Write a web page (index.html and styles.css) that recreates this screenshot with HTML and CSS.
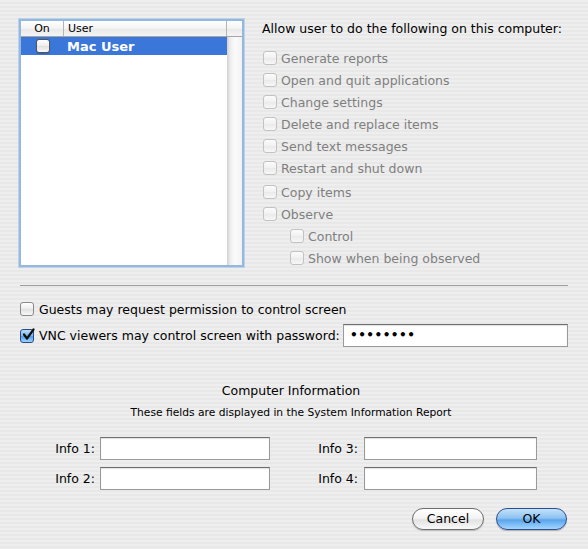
FILE: index.html
```html
<!DOCTYPE html>
<html>
<head>
<meta charset="utf-8">
<link rel="stylesheet" href="styles.css">
</head>
<body>
<div class="win">
  <div class="top">
    <div class="table-box">
      <div class="thead">
        <div class="th th-on">On</div>
        <div class="th th-user">User</div>
        <div class="th th-rest"></div>
      </div>
      <div class="tbody">
        <div class="rows">
          <div class="row sel">
            <div class="td-on"><span class="cb cb-table"></span></div>
            <div class="td-user">Mac User</div>
          </div>
        </div>
        <div class="scrollcol"></div>
      </div>
    </div>
    <div class="perms">
      <div class="perms-title">Allow user to do the following on this computer:</div>
      <div class="plist">
        <div class="prow"><span class="cb dis"></span><span class="lbl">Generate reports</span></div>
        <div class="prow"><span class="cb dis"></span><span class="lbl">Open and quit applications</span></div>
        <div class="prow"><span class="cb dis"></span><span class="lbl">Change settings</span></div>
        <div class="prow"><span class="cb dis"></span><span class="lbl">Delete and replace items</span></div>
        <div class="prow"><span class="cb dis"></span><span class="lbl">Send text messages</span></div>
        <div class="prow"><span class="cb dis"></span><span class="lbl">Restart and shut down</span></div>
        <div class="prow gap"><span class="cb dis"></span><span class="lbl">Copy items</span></div>
        <div class="prow"><span class="cb dis"></span><span class="lbl">Observe</span></div>
        <div class="prow sub"><span class="cb dis"></span><span class="lbl">Control</span></div>
        <div class="prow sub"><span class="cb dis"></span><span class="lbl">Show when being observed</span></div>
      </div>
    </div>
  </div>

  <div class="sep"></div>

  <div class="opt">
    <span class="cb"></span><span class="olbl">Guests may request permission to control screen</span>
  </div>
  <div class="opt opt-vnc">
    <span class="cb cb-checked">
      <svg width="14" height="14" viewBox="0 0 14 14"><path d="M3 6.5 L6 10.5 L12.5 1.5" fill="none" stroke="#111" stroke-width="2.2" stroke-linecap="round" stroke-linejoin="round"/></svg>
    </span>
    <span class="olbl">VNC viewers may control screen with password:</span>
    <div class="field pw">&#8226;&#8226;&#8226;&#8226;&#8226;&#8226;&#8226;&#8226;</div>
  </div>

  <div class="info-title">Computer Information</div>
  <div class="info-sub">These fields are displayed in the System Information Report</div>

  <div class="info-grid">
    <div class="ilbl">Info 1:</div><div class="field f1"></div>
    <div class="ilbl l2">Info 3:</div><div class="field f2"></div>
    <div class="ilbl">Info 2:</div><div class="field f1"></div>
    <div class="ilbl l2">Info 4:</div><div class="field f2"></div>
  </div>

  <div class="buttons">
    <div class="btn btn-cancel">Cancel</div>
    <div class="btn btn-ok">OK</div>
  </div>
</div>
</body>
</html>
```

FILE: styles.css
```css
* { box-sizing: border-box; }
html, body { margin: 0; padding: 0; }
body {
  font-family: "Lucida Grande", "DejaVu Sans", sans-serif;
  font-size: 12.5px;
  color: #000;
  background: repeating-linear-gradient(to bottom, #eeeeee 0, #eeeeee 2px, #e8e8e8 2px, #e8e8e8 4px);
}
.win {
  width: 588px;
  height: 549px;
  padding-top: 19px;
  overflow: hidden;
}
.top {
  display: flex;
  margin-left: 19px;
  height: 248px;
}
.table-box {
  width: 225px;
  height: 248px;
  border: 2px solid #94b8e0;
  box-shadow: 0 0 0 1px rgba(160,195,232,.6);
  background: #fff;
  display: flex;
  flex-direction: column;
}
.thead {
  display: flex;
  height: 16px;
  border-bottom: 1px solid #a5a5a5;
  background: linear-gradient(#ffffff, #f3f3f3 50%, #e8e8e8 51%, #f4f4f4);
  font-size: 11px;
  line-height: 15px;
}
.th { border-right: 1px solid #b4b4b4; }
.th-on { width: 43px; text-align: center; }
.th-user { width: 163px; padding-left: 4px; }
.th-rest { flex: 1; border-right: 0; }
.tbody { flex: 1; display: flex; }
.rows { width: 206px; }
.row { display: flex; height: 18px; align-items: center; }
.row.sel { background: #3a77d8; color: #fff; }
.td-on { width: 43px; display: flex; justify-content: center; }
.td-user { padding-left: 3px; font-weight: bold; font-size: 13px; }
.scrollcol {
  flex: 1;
  background: linear-gradient(to right, #cfcfcf, #ececec 3px, #fbfbfb 8px, #f2f2f2);
}
.cb {
  display: inline-block;
  width: 14px;
  height: 14px;
  border: 1px solid #8a8a8a;
  border-radius: 3px;
  background: linear-gradient(#ffffff, #ececec 50%, #e0e0e0 51%, #f8f8f8);
  flex: none;
}
.cb-table { border-color: #555; box-shadow: 0 1px 1px rgba(0,0,0,.2); }
.cb.dis { border-color: #c2c2c2; background: linear-gradient(#fbfbfb, #f1f1f1 50%, #eaeaea 51%, #f7f7f7); }
.cb-checked {
  border-color: #2a4b8a;
  background: linear-gradient(#b9dcfb, #7bb7ee 50%, #4e9ae8 51%, #9fd4ff);
  position: relative;
}
.cb-checked svg { position: absolute; left: 0; top: -2px; }
.perms { margin-left: 18px; padding-top: 2px; }
.perms-title { line-height: 16px; }
.plist { margin-top: 10px; color: #7f7f7f; }
.prow { height: 22px; display: flex; align-items: center; padding-left: 1px; }
.prow.gap { margin-top: 2px; }
.prow.sub { padding-left: 28px; }
.prow .lbl { margin-left: 4px; }
.sep {
  margin: 18px 20px 0 20px;
  height: 1px;
  background: #9d9d9d;
}
.opt {
  display: flex;
  align-items: center;
  height: 22px;
  margin: 12px 20px 0 20px;
}
.opt .olbl { margin-left: 5px; }
.opt-vnc { margin-top: 4px; height: 23px; }
.field {
  background: #fff;
  border: 1px solid #9a9a9a;
  border-top-color: #6f6f6f;
  box-shadow: inset 0 1px 1px rgba(0,0,0,.12);
  height: 23px;
}
.pw {
  margin-left: auto;
  width: 225px;
  padding-left: 6px;
  font-size: 12px;
  font-weight: bold;
  line-height: 21px;
  letter-spacing: 0.5px;
}
.info-title {
  margin-top: 36px;
  text-align: center;
  line-height: 16px;
  padding-right: 6px;
}
.info-sub {
  margin-top: 7px;
  text-align: center;
  font-size: 10.7px;
  line-height: 14px;
  padding-right: 6px;
}
.info-grid {
  margin-top: 17px;
  display: grid;
  grid-template-columns: 100px 170px 94px 173px;
  row-gap: 7px;
  align-items: center;
}
.ilbl { text-align: right; padding-right: 5px; }
.ilbl.l2 { padding-right: 6px; }
.buttons {
  margin-top: 18px;
  display: flex;
  justify-content: flex-end;
  gap: 12px;
  padding-right: 21px;
}
.btn {
  height: 22px;
  border-radius: 11px;
  line-height: 20px;
  text-align: center;
}
.btn-cancel {
  width: 72px;
  border: 1px solid #6d6d6d;
  background: linear-gradient(#ffffff, #f4f4f4 45%, #e2e2e2 55%, #fafafa);
  box-shadow: 0 1px 1px rgba(0,0,0,.2);
}
.btn-ok {
  width: 71px;
  border: 1px solid #2e4f8f;
  background: linear-gradient(#c3e1fb, #8ec3f1 45%, #5aa5ec 55%, #a3d6ff);
  box-shadow: 0 1px 1px rgba(0,0,0,.25);
}
```
